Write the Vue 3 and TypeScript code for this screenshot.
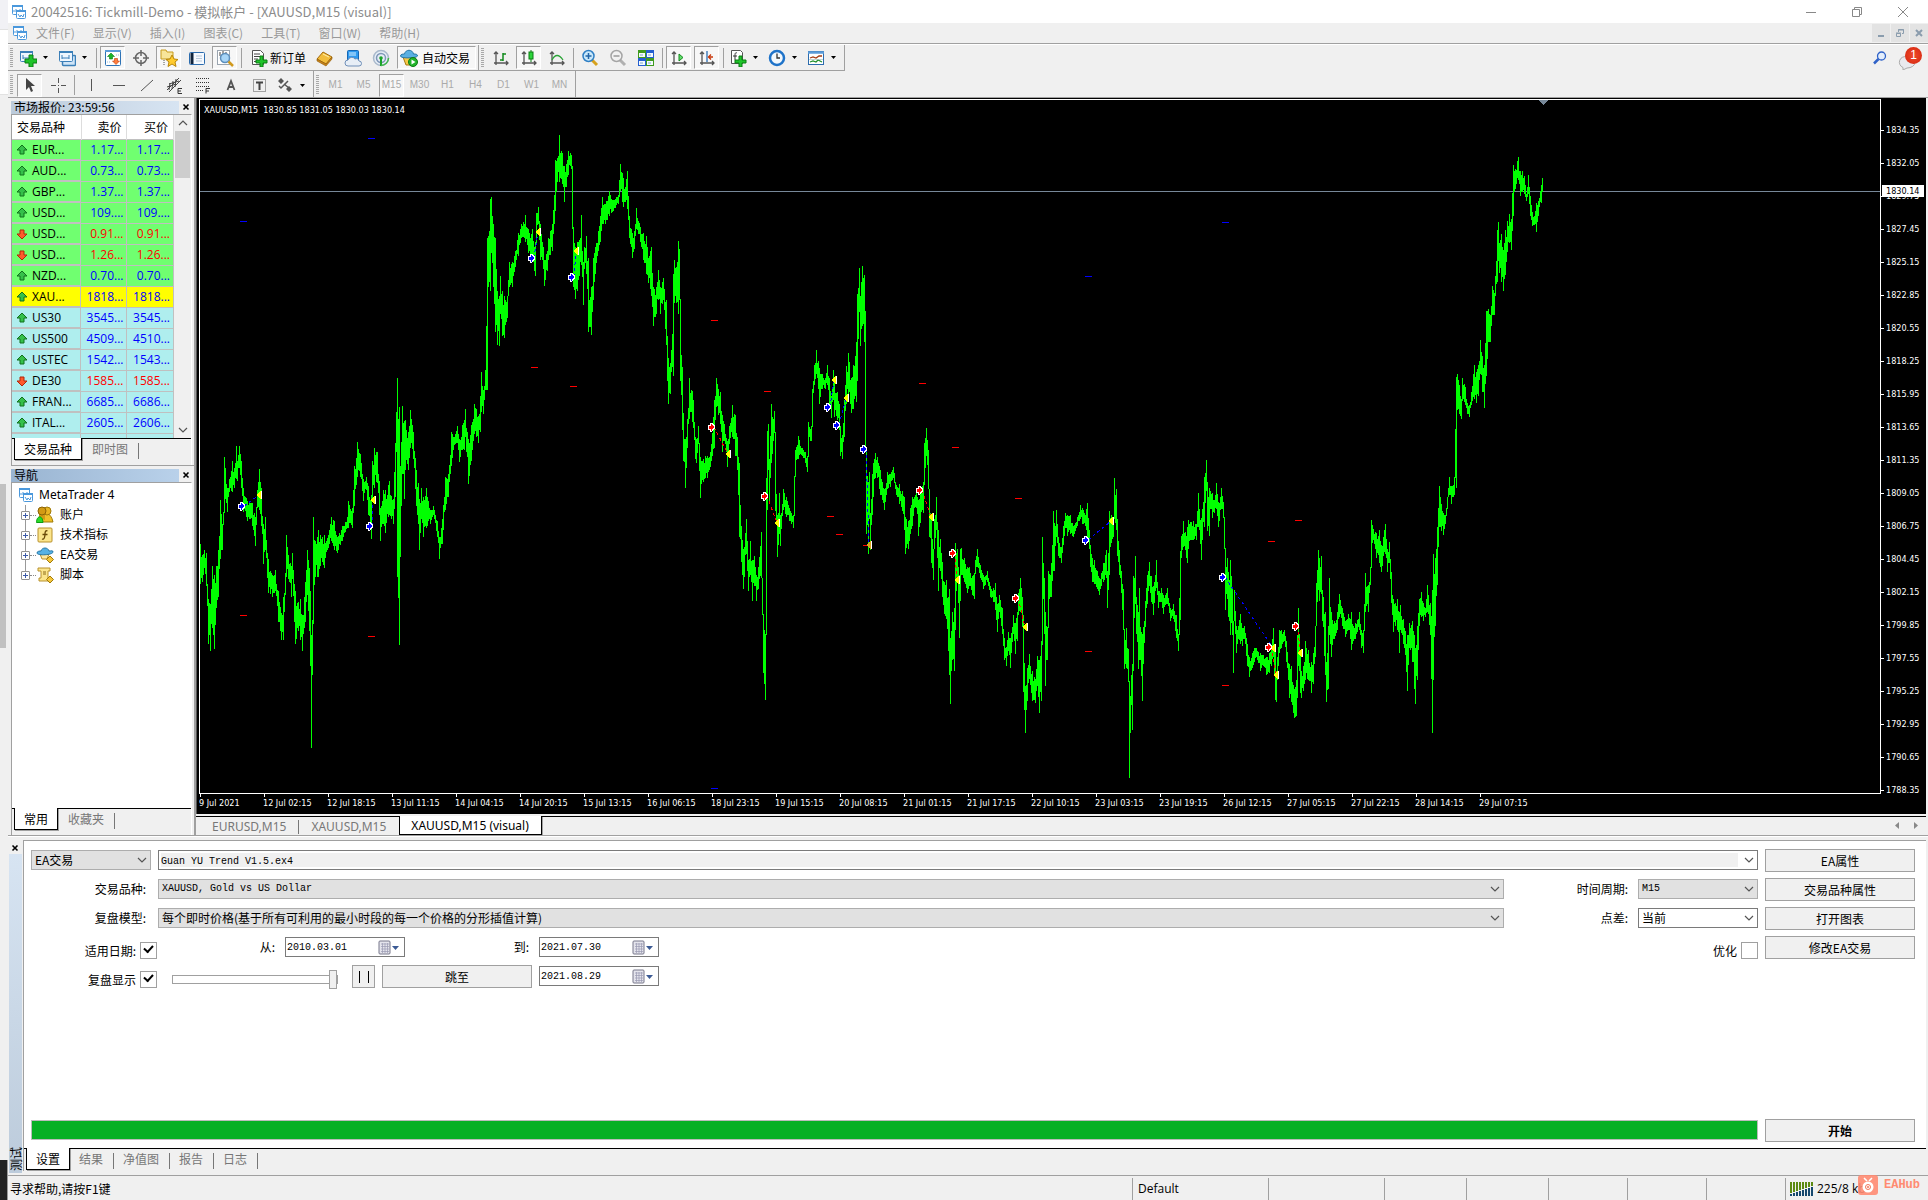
<script setup lang="ts">
import { ref } from 'vue'

interface Tool {
  kind: 'tool' | 'drop' | 'sep' | 'wide'
  icon?: string
  text?: string
  label?: string
  on?: boolean
}

const menus = ['文件(F)', '显示(V)', '插入(I)', '图表(C)', '工具(T)', '窗口(W)', '帮助(H)']

const standardTools: Tool[] = [
  { kind: 'drop', icon: 'new-chart', label: '新图表' },
  { kind: 'drop', icon: 'profiles', label: '配置文件' },
  { kind: 'sep' },
  { kind: 'tool', icon: 'market', label: '市场报价', on: true },
  { kind: 'tool', icon: 'target', label: '数据窗口' },
  { kind: 'tool', icon: 'favorites', label: '导航', on: true },
  { kind: 'tool', icon: 'terminal', label: '终端' },
  { kind: 'tool', icon: 'tester', label: '测试', on: true },
  { kind: 'sep' },
  { kind: 'wide', icon: 'order', text: '新订单' },
  { kind: 'tool', icon: 'editor', label: '编辑器' },
  { kind: 'tool', icon: 'cloud', label: '云' },
  { kind: 'tool', icon: 'signal', label: '信号' },
  { kind: 'wide', icon: 'expert', text: '自动交易', on: true },
]

const chartTools: Tool[] = [
  { kind: 'tool', icon: 'bars', label: '柱状图' },
  { kind: 'tool', icon: 'candles', label: '阴阳烛', on: true },
  { kind: 'tool', icon: 'curve', label: '折线图' },
  { kind: 'sep' },
  { kind: 'tool', icon: 'zoom-in', label: '放大' },
  { kind: 'tool', icon: 'zoom-out', label: '缩小' },
  { kind: 'tool', icon: 'tiles', label: '平铺' },
  { kind: 'sep' },
  { kind: 'tool', icon: 'scroll', label: '自动滚动', on: true },
  { kind: 'tool', icon: 'shift', label: '图表平移', on: true },
  { kind: 'sep' },
  { kind: 'drop', icon: 'indicator', label: '技术指标' },
  { kind: 'drop', icon: 'clock', label: '时间周期' },
  { kind: 'drop', icon: 'template', label: '模板' },
]

const drawTools: Tool[] = [
  { kind: 'tool', icon: 'cursor', label: '光标', on: true },
  { kind: 'tool', icon: 'cross', label: '十字线' },
  { kind: 'sep' },
  { kind: 'tool', icon: 'vline', label: '垂直线' },
  { kind: 'tool', icon: 'hline', label: '水平线' },
  { kind: 'tool', icon: 'trend', label: '趋势线' },
  { kind: 'tool', icon: 'channel', label: '通道' },
  { kind: 'tool', icon: 'fibo', label: '斐波那契' },
  { kind: 'tool', icon: 'text-a', label: '文字' },
  { kind: 'tool', icon: 'text-t', label: '文字标签' },
  { kind: 'drop', icon: 'arrows', label: '箭头' },
]

const periods = ['M1', 'M5', 'M15', 'M30', 'H1', 'H4', 'D1', 'W1', 'MN']

const toolbars = [standardTools, chartTools]

const quotes = [
  ['EUR...', '1.17...', '1.17...', 'up', 'fx'],
  ['AUD...', '0.73...', '0.73...', 'up', 'fx'],
  ['GBP...', '1.37...', '1.37...', 'up', 'fx'],
  ['USD...', '109....', '109....', 'up', 'fx'],
  ['USD...', '0.91...', '0.91...', 'down', 'fx'],
  ['USD...', '1.26...', '1.26...', 'down', 'fx'],
  ['NZD...', '0.70...', '0.70...', 'up', 'fx'],
  ['XAU...', '1818...', '1818...', 'up', 'gold'],
  ['US30', '3545...', '3545...', 'up', 'index'],
  ['US500', '4509...', '4510...', 'up', 'index'],
  ['USTEC', '1542...', '1543...', 'up', 'index'],
  ['DE30', '1585...', '1585...', 'down', 'index'],
  ['FRAN...', '6685...', '6686...', 'up', 'index'],
  ['ITAL...', '2605...', '2606...', 'up', 'index'],
]

const tree = [
  { icon: 'accounts', text: '账户' },
  { icon: 'function', text: '技术指标' },
  { icon: 'advisor', text: 'EA交易' },
  { icon: 'script', text: '脚本' },
]

const times = [
  '9 Jul 2021', '12 Jul 02:15', '12 Jul 18:15', '13 Jul 11:15', '14 Jul 04:15', '14 Jul 20:15', '15 Jul 13:15',
  '16 Jul 06:15', '18 Jul 23:15', '19 Jul 15:15', '20 Jul 08:15', '21 Jul 01:15', '21 Jul 17:15', '22 Jul 10:15',
  '23 Jul 03:15', '23 Jul 19:15', '26 Jul 12:15', '27 Jul 05:15', '27 Jul 22:15', '28 Jul 14:15', '29 Jul 07:15',
]

const prices = Array.from({ length: 21 }, (_, i) => (1834.35 - i * 2.3).toFixed(2))

// Each run holds "x:high-low" turning points in its own units, with the origin and scale that place it.
interface Run { x0: number; y0: number; sx: number; sy: number; points: string }

const runs: Run[] = [
  {
    x0: 195, y0: 95, sx: 3, sy: 2.24,
    points: `15:1005-1095 20:1030-1090 28:1020-1060 34:1025-1100 40:1130-1230 46:1140-1245 52:1055-1195 58:1075-1240
    62:1055-1150 70:1020-1125 75:908-1040 80:960-1020 86:880-915 88:812-920 95:880-935 103:860-890 110:820-890
    118:835-880 122:787-860 127:820-865 132:787-835 138:820-880 144:880-935 155:910-955 165:915-950 172:915-965
    180:945-1010 187:885-920 193:838-930 198:880-965 203:960-1050 211:945-1020 220:1040-1115 232:1075-1125
    240:1065-1110 250:1110-1180 258:1160-1220 264:1125-1220 270:1070-1120 274:985-1080 280:1030-1085 287:1055-1125
    292:1025-1085 300:1110-1230 308:1135-1200 316:1130-1220 322:1165-1245 330:1090-1180 337:1020-1120 342:1060-1200
    345:1110-1280 348:1210-1462 352:1175-1300 355:945-1185 360:1000-1080 370:975-1080 380:990-1045 388:985-1060
    400:985-1015 408:945-1000 418:955-1020 425:990-1025 440:965-1000 455:945-970 460:910-970 470:925-970 478:830-920
    487:778-855 495:805-855 503:860-910 512:855-885 520:875-940 527:895-995 532:820-910 538:790-880 546:800-870
    552:865-940 556:925-1000 563:885-960 570:885-980 583:865-940 595:905-960 600:780-900 604:710-800 607:635-1080
    611:700-1232 616:830-1035 622:697-850 626:730-905 631:727-840 638:755-840 646:705-790 655:755-815 662:840-920
    668:870-960 673:905-1020 677:880-950 685:900-990 694:880-970 704:930-960 715:920-940 725:955-990 733:990-1040
    740:950-1005 750:855-930 760:850-900 768:755-830 778:765-785 785:742-780 792:770-822 800:740-795 806:727-795
    811:703-765 820:770-872 828:740-820 836:692-760 844:703-765 850:720-780 854:675-755 859:620-710 865:660-715
    870:615-660 877:320-660 880:315-430 884:233-440 889:228-355 895:290-430 900:320-530 906:440-560 911:450-563
    916:405-490 922:440-540 928:450-545 935:450-500 942:375-430 950:375-430 960:350-385 970:310-360 978:290-320
    990:268-330 1000:300-355 1010:300-375 1021:330-405 1024:265-320 1028:250-290 1035:290-370 1043:340-390
    1048:370-428 1055:350-395 1060:320-370 1070:290-350 1078:225-290 1081:145-260 1086:140-195 1093:90-195
    1100:130-200 1106:160-240 1112:155-205 1118:125-180 1125:130-160 1129:135-165 1131:160-300 1134:295-430
    1141:340-457 1147:330-440 1153:325-405 1159:268-380 1164:375-470 1168:340-390 1173:315-400 1178:365-530
    1183:460-520 1189:430-538 1193:365-460 1200:340-400 1208:305-350 1216:270-330 1222:228-290 1230:245-290
    1243:215-270 1255:235-260 1268:225-245 1275:155-215 1280:175-240 1285:185-250 1290:205-240 1297:170-255
    1303:270-320 1310:310-365 1318:305-345 1324:253-300 1335:295-330 1345:310-370 1354:315-400 1360:365-420
    1369:340-450 1375:430-517 1382:430-490 1388:393-460 1395:430-490 1405:410-460 1413:460-560 1416:540-640
    1420:590-692 1425:600-670 1430:535-610 1435:400-630 1438:370-465 1443:385-465 1448:328-490 1452:345-460
    1456:520-640 1460:610-750 1465:712-820 1471:770-880 1475:725-790 1481:635-725 1487:660-710`,
  },
  {
    x0: 690, y0: 240, sx: 3, sy: 2.69,
    points: `5:405-490 8:430-505 14:530-590 18:535-600 24:500-550 30:585-695 38:590-650 45:580-640 52:580-640 60:570-610
    66:520-580 72:430-560 77:370-450 84:400-470 90:410-495 96:470-570 103:495-540 112:540-610 118:500-550 126:445-530
    134:470-580 142:530-620 148:600-800 152:770-865 160:830-940 168:750-845 175:860-945 181:810-900 185:860-970
    192:850-930 197:900-970 205:880-940 212:785-910 216:910-1010 220:1020-1165 226:1060-1238 229:640-950 232:515-725
    235:495-620 238:590-705 243:440-600 247:475-575 251:460-520 256:590-730 260:740-853 266:680-790 271:740-822
    280:670-725 288:690-745 298:720-755 308:740-775 311:635-710 315:565-610 325:527-590 335:560-580 345:570-600
    350:580-625 355:490-545 362:500-540 366:400-450 372:335-390 378:297-360 383:325-400 388:345-440 395:360-400
    405:370-400 411:335-390 417:370-450 422:420-480 428:350-430 433:380-475 440:410-485 446:440-510 450:500-580
    457:525-590 461:430-530 468:340-440 475:303-420 482:370-465 490:335-455 497:275-435 502:145-380 508:75-195
    511:150-285 517:70-230 522:95-275 525:190-560 529:560-790 533:650-845 536:625-750 541:735-835 545:630-740
    550:600-690 555:572-640 562:585-640 569:620-685 575:650-700 583:670-725 592:625-670 600:630-665 609:610-640
    618:660-685 628:657-710 635:675-730 641:690-780 646:745-845 655:755-830 660:720-790 667:690-770 673:690-720
    679:670-720 685:700-795 690:680-760 698:650-735 702:545-660 707:505-580 713:565-670 718:670-800 724:750-870
    729:830-915 733:750-830 737:690-780 743:780-945 749:805-890 755:865-960 761:920-1005 767:915-1020 773:960-1105
    777:940-1170 781:1070-1248 787:1000-1130 791:990-1160 794:815-1050 800:830-920 806:900-1070 810:830-970
    814:828-900 822:855-920 830:880-950 836:880-930 845:905-955 851:895-965 856:860-890 862:832-880 870:875-910
    880:900-940 890:890-920 900:930-960 908:935-975 916:922-995 922:980-1055 928:955-1000 935:990-1060 942:1070-1130
    947:1095-1145 954:1055-1105 961:1070-1150 968:1010-1060 975:1030-1115 980:1000-1080 985:950-1010 989:908-1000
    995:960-1040 999:1010-1215 1005:1200-1325 1010:1150-1240 1018:1115-1180 1025:1160-1240 1035:1180-1245
    1041:1118-1200 1048:1130-1272 1052:1080-1240 1055:800-1090 1059:870-965 1062:910-1060 1066:1000-1200
    1070:1040-1130 1074:890-1000 1082:870-960 1089:730-890 1093:760-890 1099:727-800 1105:800-850 1112:825-870
    1118:770-820 1124:735-775 1130:740-795 1140:740-790 1150:770-800 1160:745-770 1169:712-750 1177:720-765
    1185:740-770 1192:708-800 1196:780-830 1200:820-880 1206:855-920 1213:860-925 1220:890-940 1226:910-955
    1233:895-930 1240:870-920 1248:835-910 1252:890-990 1256:730-900 1262:740-815 1269:745-800 1273:640-750
    1277:670-780 1281:750-850 1287:835-900 1293:890-950 1298:940-1050 1301:1080-1155 1307:1045-1150 1313:1100-1190
    1318:1210-1448 1322:1170-1250 1327:1140-1318 1330:905-1160 1334:850-980 1339:960-1060 1343:1000-1155
    1346:935-1130 1350:1040-1130 1355:1060-1240 1360:1040-1140 1366:970-1040 1370:900-980 1376:865-930 1384:905-975
    1390:930-1010 1397:860-935 1404:945-990 1412:935-975 1420:955-1005 1431:935-980 1440:990-1025 1450:980-1020
    1457:1010-1070 1465:1060-1105`,
  },
  {
    x0: 1180, y0: 95, sx: 2.094, sy: 2.224,
    points: `0:1015-1168 3:980-1030 7:947-1005 12:980-1030 15:960-1040 17:945-1010 22:950-990 28:947-990 33:955-990
    38:885-960 43:940-1035 46:920-990 50:850-960 54:812-880 57:860-970 60:875-980 63:880-920 67:885-940 71:900-930
    75:862-920 79:905-960 85:873-920 89:905-940 92:950-1010 95:1030-1145 98:1030-1120 101:1060-1160 104:1035-1200
    108:1095-1200 110:1170-1285 114:1100-1170 118:1180-1240 122:1180-1210 126:1155-1220 130:1185-1225 135:1180-1210
    140:1220-1270 145:1250-1295 150:1240-1275 155:1230-1260 160:1230-1250 167:1240-1280 173:1245-1270 180:1250-1290
    186:1240-1285 190:1230-1270 194:1185-1250 198:1230-1345 201:1280-1350 204:1250-1300 207:1190-1240 212:1190-1230
    217:1190-1215 222:1215-1260 228:1265-1340 233:1270-1350 238:1320-1385 242:1300-1380 245:1200-1340 248:1140-1270
    251:1240-1330 254:1280-1340 258:1270-1325 262:1215-1300 268:1235-1300 274:1260-1330 278:1240-1310 282:1180-1250
    285:1085-1180 288:1012-1100 291:1030-1125 295:1025-1110 298:1100-1170 303:1150-1290 306:1260-1350 309:1180-1320
    312:1075-1200 317:1150-1250 322:1170-1210 328:1150-1190 333:1110-1160 339:1140-1180 345:1170-1205 351:1155-1190
    358:1150-1235 362:1180-1215 367:1175-1210 374:1150-1190 379:1190-1230 384:1190-1240 388:1062-1150 393:1090-1150
    397:1050-1090 400:945-1030 405:965-990 411:975-1030 416:967-1040 421:1000-1060 429:955-1020 433:1010-1060
    438:995-1040 442:1060-1130 446:1120-1195 450:1130-1180 454:1120-1190 458:1150-1240 461:1135-1190 466:1165-1220
    470:1185-1230 475:1200-1325 480:1175-1230 485:1170-1260 489:1200-1320 493:1230-1355 497:1180-1300 501:1120-1180
    504:1105-1160 509:1130-1170 514:1140-1160 518:1090-1150 523:1130-1200 527:1100-1418 530:1020-1300 534:1030-1180
    538:960-1090 542:870-960 546:910-970 550:930-978 555:935-955 559:895-915 563:850-890 568:870-910 573:850-890
    577:628-875 580:620-700 584:645-710 588:675-720 591:630-680 596:650-690 600:685-710 605:690-717 610:660-690
    615:600-675 619:615-685 624:600-670 629:545-620 633:580-660 636:600-697 640:480-625 645:475-550 649:490-550
    653:425-490 658:440-490 663:300-415 666:282-370 669:330-395 672:310-415 677:345-435 681:300-400 684:280-350
    689:265-330 693:275-345 698:155-270 702:165-210 707:138-190 711:170-225 716:170-215 721:180-220 725:220-235
    728:178-220 732:225-270 737:260-292 741:270-290 745:240-305 750:235-270 755:200-240 759:185-215`,
  },
]

// One vertical bar per pixel column; columns between turning points are interpolated with a repeatable jitter.
function buildBars(): string {
  const keys = runs.flatMap((run) =>
    run.points.trim().split(/\s+/).map((p) => {
      const [x, range] = p.split(':')
      const [hi, lo] = range.split('-').map(Number)
      return {
        x: Math.round(run.x0 + Number(x) / run.sx),
        hi: Math.round(run.y0 + hi / run.sy),
        lo: Math.round(run.y0 + lo / run.sy),
      }
    }),
  )
  let seed = 17
  const rand = () => {
    seed = (seed * 1103515245 + 12345) % 2147483648
    return seed / 2147483648
  }
  let d = ''
  let prevHi = keys[0].hi
  let prevLo = keys[0].lo
  const push = (x: number, hi: number, lo: number) => {
    let top = Math.round(hi)
    let bottom = Math.round(lo)
    if (top > prevLo) top = prevLo - 1
    if (bottom < prevHi) bottom = prevHi + 1
    d += `M${x} ${top}V${bottom}`
    prevHi = Math.round(hi)
    prevLo = Math.round(lo)
  }
  keys.forEach((k, i) => {
    push(k.x, k.hi, k.lo)
    const next = keys[i + 1]
    if (!next) return
    for (let x = k.x + 1; x < next.x; x++) {
      const t = (x - k.x) / (next.x - k.x)
      const hi = k.hi + (next.hi - k.hi) * t
      const lo = k.lo + (next.lo - k.lo) * t
      const span = lo - hi
      push(x, hi + span * rand() * 0.3, lo - span * rand() * 0.3)
    }
  })
  return d
}
const barPath = buildBars()

// Entry and exit of every trade: [side, x1, y1, x2, y2, exit colour]
const trades: [string, number, number, number, number, string][] = [
  ['buy', 241, 506, 259, 495, '#ff0'],
  ['buy', 369, 526, 373, 500, '#ff0'],
  ['buy', 531, 258, 538, 232, '#ff0'],
  ['buy', 571, 277, 576, 251, '#ff0'],
  ['sell', 711, 427, 728, 454, '#ff0'],
  ['sell', 764, 496, 777, 523, '#ff0'],
  ['buy', 827, 407, 834, 380, '#ff0'],
  ['buy', 836, 425, 846, 398, '#ff0'],
  ['buy', 863, 449, 869, 545, '#daa520'],
  ['sell', 919, 490, 931, 517, '#ff0'],
  ['sell', 952, 553, 957, 580, '#ff0'],
  ['sell', 1015, 598, 1025, 627, '#ff0'],
  ['buy', 1085, 540, 1111, 521, '#ff0'],
  ['buy', 1222, 577, 1273, 648, '#ff0'],
  ['sell', 1268, 647, 1276, 675, '#ff0'],
  ['sell', 1295, 626, 1300, 653, '#ff0'],
]

const stops: [string, number, number][] = [
  ['blue', 243, 221], ['blue', 371, 138], ['blue', 1088, 276], ['blue', 714, 788], ['blue', 1225, 222],
  ['red', 243, 615], ['red', 371, 636], ['red', 534, 367], ['red', 573, 386], ['red', 714, 320], ['red', 767, 391],
  ['red', 830, 516], ['red', 839, 534], ['red', 922, 383], ['red', 955, 447], ['red', 1018, 498], ['red', 1088, 651],
  ['red', 866, 545], ['red', 1225, 685], ['red', 1271, 541], ['red', 1298, 520],
]

const tradeColor = (side: string) => (side === 'buy' ? '#0000ff' : '#ff0000')

const testerTabs = ['设置', '结果', '净值图', '报告', '日志']
const dateFrom = ref('2010.03.01')
const dateTo = ref('2021.07.30')
const jumpDate = ref('2021.08.29')
const useDates = ref(true)
const visualMode = ref(true)
const optimize = ref(false)
const speed = ref(100)
</script>

<template>
  <div class="desktop">
    <svg class="defs" aria-hidden="true">
      <symbol id="i-app" viewBox="0 0 16 16">
        <rect x="1.5" y="1.5" width="10" height="9" rx="1" fill="#fff" stroke="#4a98dc" /><path d="M1 2h11" stroke="#4a98dc" stroke-width="2" />
        <path d="M3 6v2M5 5v3M7 6v1M9 5v2" stroke="#4a98dc" />
        <rect x="5.500" y="6.500" width="9" height="8" rx="1" fill="#fff" stroke="#4a98dc" /><path d="M5 7h10" stroke="#4a98dc" stroke-width="2" />
        <path d="M7 10l2 3 1-2 2 2 1-3" fill="none" stroke="#4a98dc" />
      </symbol>
      <symbol id="i-new-chart" viewBox="0 0 18 18">
        <rect x="1.500" y="2.500" width="12" height="10" rx="1" fill="#eef6ff" stroke="#3b7fb8" /><path d="M1 3h13" stroke="#3b7fb8" stroke-width="2" />
        <path d="M4 6v4M4 9h6" stroke="#3b7fb8" />
        <path d="M10 6h4v4h4v4h-4v4h-4v-4H6v-4h4z" fill="#1fc32a" stroke="#0b7d12" />
      </symbol>
      <symbol id="i-profiles" viewBox="0 0 18 18">
        <rect x="4.500" y="6.500" width="13" height="10" rx="1" fill="#cfe4f7" stroke="#3b7fb8" stroke-width="1.500" />
        <rect x="1.500" y="2.500" width="13" height="10" rx="1" fill="#eef6ff" stroke="#3b7fb8" /><path d="M1 3h14" stroke="#3b7fb8" stroke-width="2" />
        <path d="M4 6v4M11 6v4M4 9h7" stroke="#3b7fb8" />
      </symbol>
      <symbol id="i-market" viewBox="0 0 18 18">
        <rect x="1.500" y="1.500" width="15" height="15" rx="1" fill="#fff" stroke="#2f73b5" /><path d="M1 2h16" stroke="#5a9bd8" stroke-width="2" />
        <path d="M7 4l3.500 3.500H8.500V10h-3V7.500h-2z" fill="#19b52a" stroke="#0b7d12" stroke-width=".6" /><path d="M12 15.500L8.500 12h2V9.500h3V12h2z" fill="#ff7d3c" stroke="#c03b0b" stroke-width=".6" />
        <path d="M3 13h4M12 6h3" stroke="#9bbbd8" stroke-dasharray="1 1" />
      </symbol>
      <symbol id="i-target" viewBox="0 0 18 18">
        <circle cx="9" cy="9" r="5.500" fill="none" stroke="#666" stroke-width="1.500" /><path d="M9 1v6M9 11v6M1 9h6M11 9h6" stroke="#666" stroke-width="1.500" />
      </symbol>
      <symbol id="i-favorites" viewBox="0 0 18 18">
        <path d="M1 1h5l1 2h6v7H1z" fill="#f8e59a" stroke="#c79b1e" /><path d="M4 11v6" stroke="#555" stroke-dasharray="1 1" />
        <path d="M12 6l2 4 4 .5-3 2.500 1 4.500-4-2.500-4 2.500 1-4.500L6 10.500l4-.5z" fill="#ffcb2e" stroke="#b8860b" />
      </symbol>
      <symbol id="i-terminal" viewBox="0 0 18 18">
        <rect x="1.500" y="3.500" width="15" height="12" rx="1" fill="#f6faff" stroke="#2c6cae" /><path d="M4 4v11" stroke="#10243c" stroke-width="3" />
        <path d="M8 7h6M8 9.500h6M8 12h6" stroke="#b7c8da" />
      </symbol>
      <symbol id="i-tester" viewBox="0 0 18 18">
        <rect x="1.500" y="1.500" width="12" height="14" fill="#fff" stroke="#9aa5b0" /><path d="M4 3v4M7 2v4M10 3v3" stroke="#444" />
        <circle cx="9" cy="9" r="4.500" fill="#a8d6f8" stroke="#5d8fbd" stroke-width="1.500" /><path d="M12.500 12.500l4.500 4.500" stroke="#d19a1e" stroke-width="2.500" />
      </symbol>
      <symbol id="i-order" viewBox="0 0 18 18">
        <path d="M2.500 1.500h8l3 3v11h-11z" fill="#fff" stroke="#555" /><path d="M4 5h6M4 7.500h7M4 10h4M4 12.500h3" stroke="#444" />
        <path d="M10 7h3v4h4v3h-4v4h-3v-4H6v-3h4z" fill="#1fc32a" stroke="#0b7d12" />
      </symbol>
      <symbol id="i-editor" viewBox="0 0 18 18">
        <path d="M7 3l9 5-6 7-9-5z" fill="#f2bd3d" stroke="#a56b0c" /><path d="M1 10v2l9 5 6-7V8l-6 7z" fill="#c98418" stroke="#8d5a0a" stroke-width=".6" /><path d="M7 5l6 3" stroke="#fff0b0" />
      </symbol>
      <symbol id="i-cloud" viewBox="0 0 18 18">
        <rect x="3.500" y="1.500" width="11" height="11" rx="1" fill="#2f9af0" stroke="#1567b5" /><path d="M5 4h7M5 6h7" stroke="#d7efff" />
        <path d="M4 17a3 3 0 010-6 4 4 0 017-1 3 3 0 014 2 2.500 2.500 0 010 5z" fill="#e7eef6" stroke="#6f8fb8" />
      </symbol>
      <symbol id="i-signal" viewBox="0 0 18 18">
        <circle cx="9" cy="9" r="7.500" fill="#e6edf5" stroke="#a9b9cc" stroke-width="1.500" /><circle cx="9" cy="9" r="4.500" fill="none" stroke="#7f97b8" stroke-width="1.500" />
        <path d="M9 9v8" stroke="#1ba32a" stroke-width="2" /><path d="M9 16.500A7.500 7.500 0 0016.500 9" fill="none" stroke="#3fb64c" stroke-width="1.500" /><circle cx="9" cy="9" r="1.800" fill="#1ba32a" />
      </symbol>
      <symbol id="i-expert" viewBox="0 0 18 18">
        <path d="M3 8h12l-2 8H6z" fill="#f7c948" stroke="#a87912" /><path d="M0.500 7c0-2 3-2 4-2 1-5 8-5 9 0 2 0 4 0 4 2s-17 3-17 0z" fill="#5ab0e2" stroke="#2577a8" />
        <circle cx="13" cy="13" r="4.500" fill="#22b42c" stroke="#0b7d12" /><path d="M11.500 10.500l4 2.500-4 2.500z" fill="#fff" />
      </symbol>
      <symbol id="i-bars" viewBox="0 0 18 18">
        <path d="M4 3v13M2 14h14M2 5l2-2 2 2M14 12l2 2-2 2" fill="none" stroke="#555" stroke-width="1.300" /><path d="M11 4v8M11 5h3M8 11h3" stroke="#128a1c" stroke-width="1.500" />
      </symbol>
      <symbol id="i-candles" viewBox="0 0 18 18">
        <path d="M4 3v13M2 14h14M2 5l2-2 2 2M14 12l2 2-2 2" fill="none" stroke="#555" stroke-width="1.300" /><path d="M11 1v12" stroke="#0b7d12" /><rect x="9" y="3" width="4" height="7" fill="#2bd43a" stroke="#0b7d12" />
      </symbol>
      <symbol id="i-curve" viewBox="0 0 18 18">
        <path d="M4 3v13M2 14h14M2 5l2-2 2 2M14 12l2 2-2 2" fill="none" stroke="#555" stroke-width="1.300" /><path d="M4 11c3-6 7-6 11 0" fill="none" stroke="#2aa336" stroke-width="1.300" />
      </symbol>
      <symbol id="i-zoom-in" viewBox="0 0 18 18">
        <path d="M11 11l5 5" stroke="#d6a11e" stroke-width="3" /><circle cx="7.500" cy="7" r="5.500" fill="#c9e8fb" stroke="#2f7fc4" stroke-width="1.500" /><path d="M4.500 7h6M7.500 4v6" stroke="#2265a8" stroke-width="1.500" />
      </symbol>
      <symbol id="i-zoom-out" viewBox="0 0 18 18">
        <path d="M11 11l5 5" stroke="#b0b0b0" stroke-width="3" /><circle cx="7.500" cy="7" r="5.500" fill="#f2f2f2" stroke="#a5a5a5" stroke-width="1.500" /><path d="M4.500 7h6" stroke="#9a9a9a" stroke-width="1.500" />
      </symbol>
      <symbol id="i-tiles" viewBox="0 0 18 18">
        <path d="M1 1h8v8H1zM9 9h8v8H9z" fill="#3f9b1e" /><path d="M9 1h8v8H9zM1 9h8v8H1z" fill="#245fd0" /><path d="M2 4h6v4H2zM10 4h6v4h-6zM2 12h6v4H2zM10 12h6v4h-6z" fill="#f4faff" />
        <path d="M3 6h3M11 6h3M3 14h3M11 14h3" stroke="#7ea6c8" />
      </symbol>
      <symbol id="i-scroll" viewBox="0 0 18 18">
        <path d="M4 3v13M2 14h14M2 5l2-2 2 2M14 12l2 2-2 2" fill="none" stroke="#555" stroke-width="1.300" /><path d="M9 5l4 3.500L9 12z" fill="#62dd6c" stroke="#128a1c" />
      </symbol>
      <symbol id="i-shift" viewBox="0 0 18 18">
        <path d="M4 3v13M2 14h14M2 5l2-2 2 2M14 12l2 2-2 2" fill="none" stroke="#555" stroke-width="1.300" /><path d="M9 2v11" stroke="#2b6fb5" stroke-width="1.300" /><path d="M15 8h-5M13 5.500L10.500 8l2.500 2.500" fill="none" stroke="#c8380c" stroke-width="1.300" />
      </symbol>
      <symbol id="i-indicator" viewBox="0 0 18 18">
        <path d="M2.500 1.500h9l2 2v11h-11z" fill="#fff" stroke="#555" /><path d="M8 4c-2-1-2 1-2 3v4M4 7h4" fill="none" stroke="#333" />
        <path d="M10 7h3v4h4v3h-4v4h-3v-4H6v-3h4z" fill="#1fc32a" stroke="#0b7d12" />
      </symbol>
      <symbol id="i-clock" viewBox="0 0 18 18">
        <circle cx="9" cy="9" r="7" fill="#f3f8fc" stroke="#1f73c9" stroke-width="2.500" /><path d="M9 4.500V9h3" fill="none" stroke="#333" stroke-width="1.300" />
      </symbol>
      <symbol id="i-template" viewBox="0 0 18 18">
        <rect x="1.500" y="2.500" width="15" height="13" fill="#fff" stroke="#2c6cae" /><path d="M1 3.500h16" stroke="#5a9bd8" stroke-width="2.500" />
        <path d="M3 9l3-1 3 1 3-2 3 0" fill="none" stroke="#a33b12" stroke-width="1.300" /><path d="M3 13l3-1 3 1 2-2 4 2" fill="none" stroke="#1f8f2b" stroke-width="1.300" /><path d="M2 10.500h14" stroke="#9bb" stroke-width=".6" />
      </symbol>
      <symbol id="i-cursor" viewBox="0 0 18 18"><path d="M5 2v12l3-3 2 5 2-1-2-5h4z" fill="#444" /></symbol>
      <symbol id="i-cross" viewBox="0 0 18 18"><path d="M9.500 2v5M9.500 12v5M2 9.500h5M12 9.500h5" stroke="#555" /><path d="M9 9h1v1H9z" fill="#555" /></symbol>
      <symbol id="i-vline" viewBox="0 0 18 18"><path d="M9.500 3v12" stroke="#555" /></symbol>
      <symbol id="i-hline" viewBox="0 0 18 18"><path d="M3 9.500h12" stroke="#555" /></symbol>
      <symbol id="i-trend" viewBox="0 0 18 18"><path d="M3 15L15 4" stroke="#555" /></symbol>
      <symbol id="i-channel" viewBox="0 0 18 18">
        <path d="M1 14L13 2M3 16L15 4M4 7l-1 7M7 5l-1 8M10 3l-1 8M1 11l9-3M3 8l10-3" stroke="#444" /><path d="M16 12.500h-4v5h4M12 15h3" fill="none" stroke="#333" />
      </symbol>
      <symbol id="i-fibo" viewBox="0 0 18 18">
        <path d="M2 2.500h14M2 6.500h14M2 10.500h14M2 14.500h8" stroke="#333" stroke-dasharray="1 1" /><path d="M16 12.500h-4v5M12 15h3" fill="none" stroke="#333" />
      </symbol>
      <symbol id="i-text-a" viewBox="0 0 18 18"><path d="M5.500 14L9 5l3.500 9M7 11h4" fill="none" stroke="#555" stroke-width="1.800" /></symbol>
      <symbol id="i-text-t" viewBox="0 0 18 18"><rect x="3.500" y="3.500" width="12" height="12" fill="none" stroke="#555" stroke-dasharray="1 1" /><path d="M6 6.500h7M9.500 6v8" stroke="#444" stroke-width="2" /></symbol>
      <symbol id="i-arrows" viewBox="0 0 18 18">
        <path d="M5 2l3 3-3 3-3-3zM13 16l-3-3 3-3 3 3z" fill="#555" /><path d="M3 10l2 2 7-7M8 8l5 4" fill="none" stroke="#555" stroke-width="1.500" />
      </symbol>
      <symbol id="i-up" viewBox="0 0 12 12"><path d="M6 1l5 5H8v4H4V6H1z" fill="#35c04a" stroke="#11701c" /></symbol>
      <symbol id="i-down" viewBox="0 0 12 12"><path d="M6 11l5-5H8V2H4v4H1z" fill="#ff5a2b" stroke="#b3260a" /></symbol>
      <symbol id="i-accounts" viewBox="0 0 18 18">
        <path d="M6 16V9c2-3 9-3 11 7z" fill="#f0c02a" stroke="#a07a08" /><circle cx="11" cy="5" r="4" fill="#e8b524" stroke="#a07a08" />
        <path d="M3 12V8h6v6z" fill="#d29a14" /><circle cx="6" cy="5" r="4" fill="#d29a14" stroke="#8a6206" /><path d="M.500 16.500c0-7 6-8 6.500 0z" fill="#2bdc2b" stroke="#0b9d12" />
      </symbol>
      <symbol id="i-function" viewBox="0 0 18 18">
        <rect x="2" y="2" width="14" height="14" rx="1" fill="#fbe58c" stroke="#b8912c" /><path d="M11.500 5c-2-1-2.500 1-2.500 3s-.5 6-3 5M6.500 8.500h5" fill="none" stroke="#6a4a08" stroke-width="1.300" />
      </symbol>
      <symbol id="i-advisor" viewBox="0 0 18 18">
        <path d="M4 8h9l-2 5H6z" fill="#ffe9a0" stroke="#b8912c" /><path d="M1 7c0-2 3-2 4-2 1-4 7-4 8 0 2 0 4-1 4 1 0 3-16 4-16 1z" fill="#55b1e4" stroke="#2577a8" /><path d="M14 10l3.500 3.500L14 17l-3.500-3.500z" fill="#f4c63c" stroke="#a07a08" />
      </symbol>
      <symbol id="i-script" viewBox="0 0 18 18">
        <path d="M2 2h12v3h-2v7h2v3H3v-3h2V5H2z" fill="#fbe58c" stroke="#b8912c" /><path d="M7 6h3M7 8h3" stroke="#8a6a18" /><path d="M14 10l3.500 3.500L14 17l-3.500-3.500z" fill="#f4c63c" stroke="#a07a08" />
      </symbol>
      <symbol id="i-chevron" viewBox="0 0 10 10"><path d="M1 3l4 4 4-4" fill="none" stroke="#555" stroke-width="1.200" /></symbol>
      <symbol id="i-close" viewBox="0 0 8 8"><path d="M1.500 1.500l5 5M6.500 1.500l-5 5" stroke="#000" stroke-width="1.600" /></symbol>
      <symbol id="i-calendar" viewBox="0 0 22 16">
        <rect x="1" y="1" width="11" height="13" rx="1" fill="#e4e4ec" stroke="#77778a" /><path d="M3 4h8M3 6.500h8M3 9h8M3 11.500h8M4.500 3v10M7 3v10M9.500 3v10" stroke="#9a9ab2" stroke-width=".7" /><path d="M14 6h7l-3.500 4z" fill="#3c5a94" />
      </symbol>
    </svg>

    <div class="behind" aria-hidden="true">
      <i class="b-head"></i><i class="b-page"></i><i class="b-gray"></i><i class="b-thumb"></i><i class="b-rest"></i><i class="b-dark"></i>
    </div>

    <div class="app">
      <header class="title">
        <svg class="ic16"><use href="#i-app" /></svg>
        <span>20042516: Tickmill-Demo - 模拟帐户 - [XAUUSD,M15 (visual)]</span>
        <div class="winbtns">
          <button type="button" aria-label="最小化"><svg width="12" height="12"><path d="M1 6.500h10" stroke="#888" /></svg></button>
          <button type="button" aria-label="还原"><svg width="12" height="12"><path d="M1.500 3.500h7v7h-7zM3.500 3V1.500h7v7H9" fill="none" stroke="#888" /></svg></button>
          <button type="button" aria-label="关闭"><svg width="12" height="12"><path d="M1 1l10 10M11 1L1 11" stroke="#888" /></svg></button>
        </div>
      </header>

      <nav class="menu">
        <svg class="ic16"><use href="#i-app" /></svg>
        <button v-for="m in menus" :key="m" type="button">{{ m }}</button>
        <div class="mdi">
          <button type="button" aria-label="最小化图表"><svg width="10" height="10"><path d="M2 8h6" stroke="#8a9cad" stroke-width="2" /></svg></button>
          <button type="button" aria-label="还原图表"><svg width="10" height="10"><path d="M1.500 5.500h4v3h-4zM3.500 4V1.500h5v4H7M1 5h5M3 2h6" fill="none" stroke="#8a9cad" /></svg></button>
          <button type="button" aria-label="关闭图表"><svg width="10" height="10"><path d="M2 2l6 6M8 2L2 8" stroke="#8a9cad" stroke-width="2" /></svg></button>
        </div>
      </nav>

      <div class="bars">
        <div class="barrow">
          <div v-for="(bar, b) in toolbars" :key="b" class="bar">
            <i class="grip"></i>
            <template v-for="(t, i) in bar" :key="i">
              <i v-if="t.kind === 'sep'" class="sep"></i>
              <button v-else type="button" :class="[t.kind, { on: t.on }]" :aria-label="t.label">
                <svg class="ic18"><use :href="'#i-' + t.icon" /></svg>
                <span v-if="t.text">{{ t.text }}</span>
                <svg v-if="t.kind === 'drop'" class="caret" width="5" height="3"><path d="M0 0h5L2.500 3z" /></svg>
              </button>
            </template>
          </div>
          <div class="right-tools">
            <button type="button" aria-label="搜索">
              <svg width="14" height="14"><circle cx="8.500" cy="5" r="4" fill="#e4eefc" stroke="#2f62c8" stroke-width="1.300" /><path d="M5.500 8L1 12.500" stroke="#2f62c8" stroke-width="2.500" /></svg>
            </button>
            <button type="button" class="bell" aria-label="消息">
              <svg width="18" height="16"><path d="M9 3a8 5.500 0 010 11l-4 2v-2.500A5.500 5.500 0 019 3z" fill="#e9e9ee" stroke="#aaa" /></svg>
              <b>1</b>
            </button>
          </div>
        </div>
        <div class="barrow lower">
          <div class="bar">
            <i class="grip"></i>
            <template v-for="(t, i) in drawTools" :key="i">
              <i v-if="t.kind === 'sep'" class="sep"></i>
              <button v-else type="button" :class="[t.kind, { on: t.on }]" :aria-label="t.label">
                <svg class="ic18"><use :href="'#i-' + t.icon" /></svg>
                <svg v-if="t.kind === 'drop'" class="caret" width="5" height="3"><path d="M0 0h5L2.500 3z" /></svg>
              </button>
            </template>
          </div>
          <div class="bar">
            <i class="grip"></i>
            <button v-for="p in periods" :key="p" type="button" class="tool period" :class="{ on: p === 'M15' }">{{ p }}</button>
          </div>
        </div>
      </div>

      <main class="work">
        <aside class="dock">
          <section class="panel watch">
            <div class="caption"><h2>市场报价: 23:59:56</h2><button type="button" aria-label="关闭"><svg class="ic8"><use href="#i-close" /></svg></button></div>
            <div class="box">
              <div class="list">
                <table>
                  <thead><tr><th>交易品种</th><th>卖价</th><th>买价</th></tr></thead>
                  <tbody>
                    <tr v-for="(q, i) in quotes" :key="i" :class="[q[3], q[4]]">
                      <td><svg class="ic12"><use :href="'#i-' + q[3]" /></svg>{{ q[0] }}</td>
                      <td>{{ q[1] }}</td>
                      <td>{{ q[2] }}</td>
                    </tr>
                    <tr class="index"><td></td><td></td><td></td></tr>
                  </tbody>
                </table>
                <div class="vscroll" aria-hidden="true">
                  <svg class="flip"><use href="#i-chevron" /></svg><i></i><svg><use href="#i-chevron" /></svg>
                </div>
              </div>
              <div class="tabs"><button type="button" class="cur">交易品种</button><button type="button">即时图</button></div>
            </div>
          </section>
          <section class="panel navi">
            <div class="caption deep"><h2>导航</h2><button type="button" aria-label="关闭"><svg class="ic8"><use href="#i-close" /></svg></button></div>
            <div class="box">
              <div class="tree">
                <div class="root"><svg class="ic16"><use href="#i-app" /></svg>MetaTrader 4</div>
                <ul>
                  <li v-for="n in tree" :key="n.text"><i class="plus"></i><i class="twig"></i><svg class="ic18"><use :href="'#i-' + n.icon" /></svg>{{ n.text }}</li>
                </ul>
              </div>
              <div class="tabs"><button type="button" class="cur">常用</button><button type="button">收藏夹</button></div>
            </div>
          </section>
        </aside>

        <section class="chartwin">
          <div class="chart">
            <div class="plotcol">
              <div class="plot">
                <svg class="plotsvg" width="1681" height="693" viewBox="200 100 1681 693" shape-rendering="crispEdges">
                  <path d="M200 191.500H9999" stroke="#778899" />
                  <path :d="barPath" transform="translate(.5 0)" stroke="#00ff00" fill="none" />
                  <g v-for="(s, i) in stops" :key="'s' + i"><rect :x="s[1] - 3" :y="s[2]" width="7" height="1" :fill="s[0]" /></g>
                  <g v-for="(t, i) in trades" :key="'t' + i">
                    <line :x1="t[1] + 3" :y1="t[2]" :x2="t[3]" :y2="t[4]" :stroke="tradeColor(t[0])" stroke-dasharray="3 3" />
                    <path :transform="`translate(${t[1]} ${t[2]})`" d="M-3 -2h2v-2h2l3 4-3 4h-2v-2h-2z" :fill="tradeColor(t[0])" stroke="#fff" />
                    <path :transform="`translate(${t[3]} ${t[4]})`" d="M-3 0l5 -4v8z" :fill="t[5]" /><path :transform="`translate(${t[3]} ${t[4]})`" d="M2.500 -4v8" stroke="#fff" />
                  </g>
                  <path d="M1538 100h10l-5 5z" fill="#778899" />
                </svg>
                <p class="ohlc">XAUUSD,M15&nbsp; 1830.85 1831.05 1830.03 1830.14</p>
              </div>
              <div class="timeaxis"><span v-for="t in times" :key="t">{{ t }}</span></div>
            </div>
            <div class="priceaxis">
              <span v-for="p in prices" :key="p">{{ p }}</span>
              <b class="last">1830.14</b>
            </div>
          </div>
          <div class="tabs charttabs">
            <button type="button">EURUSD,M15</button><button type="button">XAUUSD,M15</button><button type="button" class="cur">XAUUSD,M15 (visual)</button>
            <span class="tabscroll" aria-hidden="true">
              <svg width="4" height="7"><path d="M4 0v7L0 3.500z" fill="#888" /></svg><svg width="4" height="7"><path d="M0 0v7l4-3.500z" fill="#888" /></svg>
            </span>
          </div>
        </section>
      </main>

      <section class="tester">
        <div class="side">
          <button type="button" aria-label="关闭"><svg class="ic8"><use href="#i-close" /></svg></button>
          <div class="vtitle"><span>测试</span></div>
        </div>
        <div class="testbody">
          <form class="form" @submit.prevent>
            <div class="row">
              <span class="combo w120 gray"><select aria-label="类型"><option>EA交易</option></select><svg><use href="#i-chevron" /></svg></span>
              <span class="combo grow expertsel"><select aria-label="EA文件" class="mono"><option>Guan YU Trend V1.5.ex4</option></select><svg><use href="#i-chevron" /></svg></span>
              <button type="button" class="push">EA属性</button>
            </div>
            <div class="row">
              <label class="lead" for="symbol">交易品种:</label>
              <span class="combo grow gray"><select id="symbol" class="mono"><option>XAUUSD, Gold vs US Dollar</option></select><svg><use href="#i-chevron" /></svg></span>
              <label class="mid" for="period">时间周期:</label>
              <span class="combo w120 gray"><select id="period" class="mono"><option>M15</option></select><svg><use href="#i-chevron" /></svg></span>
              <button type="button" class="push">交易品种属性</button>
            </div>
            <div class="row">
              <label class="lead" for="model">复盘模型:</label>
              <span class="combo grow gray"><select id="model"><option>每个即时价格(基于所有可利用的最小时段的每一个价格的分形插值计算)</option></select><svg><use href="#i-chevron" /></svg></span>
              <label class="mid" for="spread">点差:</label>
              <span class="combo w120"><select id="spread"><option>当前</option></select><svg><use href="#i-chevron" /></svg></span>
              <button type="button" class="push">打开图表</button>
            </div>
            <div class="row">
              <label class="tick first">适用日期:<input v-model="useDates" type="checkbox" /></label>
              <label class="mid from" for="from">从:</label>
              <span class="date"><input id="from" v-model="dateFrom" type="text" /><svg><use href="#i-calendar" /></svg></span>
              <label class="mid" for="to">到:</label>
              <span class="date"><input id="to" v-model="dateTo" type="text" /><svg><use href="#i-calendar" /></svg></span>
              <label class="tick last-tick">优化<input v-model="optimize" type="checkbox" /></label>
              <button type="button" class="push">修改EA交易</button>
            </div>
            <div class="row">
              <label class="tick first">复盘显示<input v-model="visualMode" type="checkbox" /></label>
              <input v-model="speed" class="slider" type="range" min="0" max="100" aria-label="速度" />
              <button type="button" class="push pause" aria-label="暂停"><svg width="10" height="14"><path d="M.5 1v12M9.500 1v12" stroke="#000" /></svg></button>
              <button type="button" class="push">跳至</button>
              <span class="date jump"><input v-model="jumpDate" type="text" aria-label="跳至日期" /><svg><use href="#i-calendar" /></svg></span>
            </div>
            <div class="row bottom">
              <progress class="grow" value="100" max="100" aria-label="测试进度"></progress>
              <button type="button" class="push start">开始</button>
            </div>
          </form>
          <div class="tabs testtabs"><button v-for="(t, i) in testerTabs" :key="t" type="button" :class="{ cur: i === 0 }">{{ t }}</button></div>
        </div>
      </section>

      <footer class="status">
        <span class="hint">寻求帮助,请按F1键</span>
        <span class="cell c-136">Default</span><span class="cell c-116"></span><span class="cell c-82"></span><span class="cell c-82"></span>
        <span class="cell c-78"></span><span class="cell c-78"></span><span class="cell c-78"></span>
        <span class="cell c-144">
          <svg width="23" height="14"><path d="M1 0v11M4 0v10M7 0v9M10 0v8M13 0v7M16 0v6M19 0v5M22 0v4" stroke="#5c8a12" stroke-width="2" /><path d="M1 14v-2M4 14v-3M7 14v-4M10 14v-5M13 14V8M16 14V7M19 14V6M22 14V5" stroke="#17486e" stroke-width="2" /></svg>
          225/8 kb
        </span>
        <div class="brand">
          <svg width="20" height="20"><rect width="20" height="20" rx="3" fill="#ff8b72" fill-opacity=".9" /><circle cx="10" cy="12" r="5.500" fill="#fff" /><path d="M6 3l3 3M14 3l-3 3" stroke="#fff" stroke-width="1.500" /><circle cx="10" cy="12" r="2.500" fill="none" stroke="#f0765c" /><circle cx="10" cy="12" r="1" fill="#f0765c" /></svg>
          <span>EAHub</span>
        </div>
      </footer>
    </div>
  </div>
</template>

<style>
body { margin: 0; background: #f0f0f0; }
</style>

<style scoped>
* { box-sizing: border-box; }
.desktop { display: flex; height: 100vh; min-height: 900px; font: 12px/16px "Noto Sans CJK SC", "Open Sans", sans-serif; color: #000; background: #f0f0f0; overflow: hidden; }
.defs { position: absolute; width: 0; height: 0; }
button { font: inherit; color: inherit; padding: 0; border: 0; background: none; border-radius: 0; }
svg { display: block; flex: none; }
.ic8 { width: 8px; height: 8px; }
.ic12 { width: 12px; height: 12px; }
.ic16 { width: 16px; height: 16px; }
.ic18 { width: 18px; height: 18px; }

.behind { flex: 0 0 8px; display: flex; flex-direction: column; background: #f0f0f0; }
.b-head { height: 29px; background: #f1f1f5; }
.b-page { height: 66px; background: #fff; border-top: 1px solid #e2e2e2; border-bottom: 1px solid #e2e2e2; }
.b-gray { height: 389px; }
.b-thumb { width: 6px; height: 164px; background: #c1c1c1; }
.b-rest { flex: 1; }
.b-dark { height: 40px; background: #222; border-right: 1px solid #999; }

.app { flex: 1; min-width: 0; display: flex; flex-direction: column; }
.title { flex: 0 0 23px; display: flex; align-items: center; gap: 4px; padding-left: 3px; background: #fff; color: #8c8c8c; font-size: 13px; line-height: 14px; }
.winbtns { margin-left: auto; display: flex; padding-right: 2px; }
.winbtns button { width: 46px; height: 22px; display: grid; place-items: center; }
.menu { flex: 0 0 21px; display: flex; align-items: center; border-bottom: 1px solid #a0a0a0; padding-left: 4px; color: #999; line-height: 14px; }
.menu > button { margin-right: 18px; }
.menu > svg { margin-right: 8px; }
.mdi { margin-left: auto; display: flex; gap: 1px; }
.mdi button { width: 18px; height: 18px; display: grid; place-items: center; background: #e3e3e3; }

.bars { border-top: 1px solid #fff; border-bottom: 1px solid #a0a0a0; flex: 0 0 54px; }
.barrow { display: flex; height: 26px; }
.bar { display: flex; align-items: center; border-right: 1px solid #a0a0a0; border-bottom: 1px solid #a0a0a0; padding-right: 1px; }
.lower .bar { border-bottom: 0; padding-top: 2px; }
.grip { width: 3px; height: 20px; margin: 0 3px 0 2px; background: repeating-linear-gradient(#a8a8a8 0 1px, #f0f0f0 1px 2px); }
.sep { width: 1px; height: 20px; margin: 0 2px; background: #a0a0a0; }
.tool { width: 25px; height: 23px; margin: 0 2px 0 1px; display: grid; place-items: center; border: 1px solid transparent; }
.drop { width: 39px; height: 23px; display: flex; align-items: center; gap: 6px; padding-left: 3px; }
.wide { height: 23px; display: flex; align-items: center; gap: 2px; padding: 0 4px 0 5px; border: 1px solid transparent; }
.wide.on { width: 79px; margin: 0 1px 0 2px; padding: 0 2px; gap: 4px; }
.on { background: #f7f7f7; border-color: #a0a0a0 #fff #fff #a0a0a0; }
.period { color: #aaa; font: 10px/14px "Liberation Sans", sans-serif; }
.right-tools { margin-left: auto; display: flex; align-items: center; gap: 11px; padding-right: 6px; }
.bell { position: relative; width: 24px; height: 24px; display: flex; align-items: flex-end; }
.bell b { position: absolute; right: 0; top: 1px; width: 17px; height: 17px; border-radius: 9px; background: radial-gradient(#ee4b2b, #d4230d); color: #fff; font: 12px/17px "Liberation Sans", sans-serif; text-align: center; }

.work { flex: 1; min-height: 0; display: flex; }
.dock { flex: 0 0 188px; display: flex; flex-direction: column; border-right: 2px solid #a0a0a0; padding: 2px 0 0 3px; }
.panel { display: flex; flex-direction: column; min-height: 0; }
.watch { flex: 0 0 366px; border-bottom: 1px solid #a0a0a0; }
.navi { flex: 1; padding-top: 2px; }
.caption { display: flex; height: 14px; align-items: center; flex: none; }
.caption h2 { flex: 1; height: 13px; margin: 0; padding-left: 3px; font: 12px/11px "Noto Sans CJK SC", "Open Sans", sans-serif; background: linear-gradient(90deg, #bccbdb, #d7e4f2); }
.caption.deep h2 { background: linear-gradient(90deg, #99b4d1, #b9d1ea); }
.caption button { width: 14px; margin-right: 1px; display: grid; place-items: center; }
.box { flex: 1; min-height: 0; display: flex; flex-direction: column; margin-right: 2px; border-left: 1px solid #a0a0a0; border-top: 1px solid #a0a0a0; border-right: 1px solid #fff; padding-bottom: 4px; }
.list { flex: 1; min-height: 0; display: flex; overflow: hidden; background: #fff; }
table { flex: 1; border-collapse: collapse; table-layout: fixed; height: 0; }
th { height: 24px; padding: 0 5px; font-weight: 400; text-align: right; border-right: 1px solid #ddd; }
th:first-child { width: 69px; text-align: left; }
td { height: 21px; padding: 0 3px 0 0; text-align: right; color: #00f; border: solid #c0c0c0; border-width: 1px 1px 1px 0; line-height: 20px; white-space: nowrap; overflow: hidden; font-family: "Open Sans", sans-serif; }
td:first-child { display: flex; align-items: center; gap: 4px; padding-left: 4px; color: #000; width: 69px; }
tr.down td + td { color: #f00; }
.fx { background: #70ff70; }
.gold { background: #ff0; }
.index { background: #afeeee; }
.vscroll { width: 17px; display: flex; flex-direction: column; align-items: center; background: #f0f0f0; }
.vscroll svg { width: 10px; height: 10px; margin: 3px 0; }
.vscroll .flip { transform: rotate(180deg); }
.vscroll i { width: 15px; height: 47px; margin-bottom: auto; background: #cdcdcd; }

.tabs { flex: 0 0 23px; display: flex; align-items: flex-start; border-top: 1px solid #000; padding-left: 2px; color: #777; }
.tabs button { height: 16px; margin-top: 4px; padding: 0 10px; border-right: 1px solid #777; line-height: 12px; white-space: nowrap; display: flex; }
.tabs .cur { height: 22px; margin-top: -1px; padding: 0 9px; color: #000; background: #fff; border: solid #000; border-width: 0 1px 1px; box-shadow: 1px 1px #a0a0a0; line-height: 21px; }

.tree { flex: 1; background: #fff; padding-top: 2px; }
.root { display: flex; align-items: center; gap: 5px; height: 20px; padding-left: 6px; font-family: "Noto Sans", sans-serif; }
ul { list-style: none; margin: 0; padding: 0; }
li { height: 20px; display: flex; align-items: center; padding-left: 9px; font-family: "Open Sans", "Noto Sans CJK SC", sans-serif; background: linear-gradient(90deg, transparent 13px, #999 13px 14px, transparent 14px); }
li:last-child { background-size: 100% 10px; background-repeat: no-repeat; }
li svg { margin-right: 6px; }
.plus { width: 9px; height: 9px; border: 1px solid #919191; border-radius: 1px; background: linear-gradient(#3b5aa8, #3b5aa8) center / 5px 1px no-repeat, linear-gradient(#3b5aa8, #3b5aa8) center / 1px 5px no-repeat, #fff; }
.twig { width: 6px; border-top: 1px dotted #888; }

.chartwin { flex: 1; min-width: 0; display: flex; flex-direction: column; padding-right: 2px; }
.chart { flex: 1; min-height: 0; display: flex; background: #000; border-left: 1px solid #555; color: #fff; font: 9px/14px "DejaVu Sans Condensed", "DejaVu Sans", sans-serif; }
.plotcol { flex: 1; min-width: 0; display: flex; flex-direction: column; padding: 1px 0 0 2px; }
.plot { flex: 1; min-height: 0; position: relative; overflow: hidden; border: 1px solid #fff; }
.plotsvg { overflow: visible; }
.ohlc { position: absolute; left: 4px; top: 3px; margin: 0; white-space: nowrap; }
.timeaxis { height: 20px; display: flex; flex: none; overflow: hidden; }
.timeaxis span { flex: 0 0 64px; padding-top: 2px; white-space: nowrap; background: linear-gradient(#fff, #fff) 1px 0 / 1px 3px no-repeat; }
.priceaxis { flex: 0 0 45px; position: relative; padding-top: 16px; overflow: hidden; }
.priceaxis span { display: block; height: 33px; line-height: 33px; padding-left: 5px; background: linear-gradient(#fff, #fff) 0 50% / 3px 1px no-repeat; }
.last { position: absolute; left: 1px; right: 2px; top: 87px; height: 12px; padding-left: 4px; background: #fff; color: #000; font-weight: 400; line-height: 12px; }
.charttabs { margin-top: 2px; flex-basis: 19px; padding-left: 4px; font-family: "Noto Sans", sans-serif; }
.charttabs button { margin-top: 3px; height: 14px; padding: 0 12px; line-height: 14px; }
.charttabs button:nth-child(2) { border-right-color: transparent; }
.charttabs .cur { height: 19px; margin-top: -1px; padding: 0 12px 0 11px; line-height: 20px; }
.tabscroll { margin-left: auto; display: flex; gap: 15px; padding: 5px 8px 0 0; }

.tester { flex: 0 0 338px; display: flex; border-top: 1px solid #a0a0a0; box-shadow: inset 0 1px #fff; }
.side { flex: 0 0 15px; display: flex; flex-direction: column; padding-left: 1px; }
.side button { height: 18px; padding: 5px 0 0 2px; }
.vtitle { flex: 1; width: 13px; display: flex; align-items: flex-end; background: linear-gradient(#d7e4f2, #bccbdb); }
.vtitle span { writing-mode: vertical-rl; text-orientation: sideways; transform: rotate(180deg); line-height: 13px; padding-top: 2px; }
.testbody { flex: 1; min-width: 0; display: flex; flex-direction: column; margin: 4px 2px 2px 0; border: solid #a0a0a0; border-width: 1px 0 0 1px; }
.form { flex: 1; display: flex; flex-direction: column; background: #fff; padding: 8px 11px 6px 7px; }
.row { display: flex; align-items: flex-start; height: 29px; }
.row.bottom { height: 23px; margin-top: auto; }
.grow { flex: 1; min-width: 0; }
.w120 { flex: 0 0 120px; }
.combo { position: relative; height: 20px; margin-top: 1px; display: flex; background: #fff; border: 1px solid #7a7a7a; }
.gray { background: #e1e1e1; border-color: #adadad; }
.combo select { appearance: none; flex: 1; min-width: 0; border: 0; border-radius: 0; padding: 0 20px 0 3px; background: transparent; font: 12px/18px "Noto Sans CJK SC", sans-serif; color: #000; }
.combo .mono { font: 10px/18px "Liberation Mono", monospace; }
.combo svg { position: absolute; right: 3px; top: 4px; width: 10px; height: 10px; pointer-events: none; }
.expertsel { margin-left: 7px; }
.expertsel select { margin: 2px; padding-left: 0; line-height: 14px; background: linear-gradient(#f0f0f0, #f0f0f0) left / calc(100% - 17px) 100% no-repeat; }
.push { width: 150px; height: 23px; margin-left: 7px; flex: none; background: #f0f0f0; border: 1px solid #a0a0a0; line-height: 20px; }
.lead { width: 120px; padding-right: 5px; margin-right: 7px; text-align: right; line-height: 22px; }
.mid { width: 134px; padding-right: 10px; text-align: right; line-height: 22px; }
.from { width: 128px; }
.tick { display: flex; align-items: center; justify-content: flex-end; gap: 4px; height: 29px; }
.first { width: 126px; }
.last-tick { margin-left: auto; }
.tick input { appearance: none; width: 17px; height: 17px; margin: 0; border: 1px solid #a0a0a0; background: #fff; display: grid; place-items: center; }
.tick input:checked::before { content: ""; width: 7px; height: 4px; margin-bottom: 5px; border: solid #000; border-width: 0 0 2px 2px; transform: rotate(-48deg); }
.date { flex: 0 0 120px; position: relative; height: 20px; margin-top: 1px; display: flex; border: 1px solid #7a7a7a; background: #fff; }
.date input { width: 100%; border: 0; padding: 2px 26px 0 1px; background: none; font: 10px/16px "Liberation Mono", monospace; }
.date svg { position: absolute; right: 4px; top: 2px; width: 22px; height: 16px; pointer-events: none; }
.jump { margin-left: 7px; }
.slider { appearance: none; width: 166px; height: 29px; margin: 0 7px 0 15px; background: none; }
.slider::-webkit-slider-runnable-track { height: 9px; border: 1px solid #a0a0a0; background: #fff; }
.slider::-webkit-slider-thumb { appearance: none; width: 8px; height: 19px; margin-top: -6px; background: #f0f0f0; border: 1px solid #a0a0a0; }
.pause { width: 23px; display: grid; place-items: center; }
.start { font-weight: 700; }
progress { appearance: none; height: 20px; margin-top: 1px; border: 1px solid #bcbcbc; background: #e6e6e6; }
progress::-webkit-progress-bar { background: #e6e6e6; }
progress::-webkit-progress-value { background: #06b025; }
.testtabs { flex-basis: 23px; background: #f0f0f0; }
.testtabs button { padding: 0 10px 0 9px; }

.status { flex: 0 0 27px; display: flex; align-items: stretch; position: relative; box-shadow: inset 0 2px #f0f0f0, inset 0 3px #a0a0a0; padding-top: 5px; }
.hint { flex: 1; padding-left: 2px; line-height: 22px; }
.cell { flex: none; border-left: 1px solid #a0a0a0; padding-left: 5px; line-height: 22px; display: flex; align-items: center; gap: 4px; font-family: "Open Sans", sans-serif; }
.c-144 { padding-left: 4px; }
.c-136 { width: 136px; } .c-116 { width: 116px; } .c-82 { width: 82px; } .c-78 { width: 79px; } .c-144 { width: 143px; }
.brand { position: absolute; right: 8px; top: 1px; display: flex; align-items: center; gap: 6px; color: #ff8b72; font: 700 12px/22px "Liberation Mono", monospace; }
</style>
